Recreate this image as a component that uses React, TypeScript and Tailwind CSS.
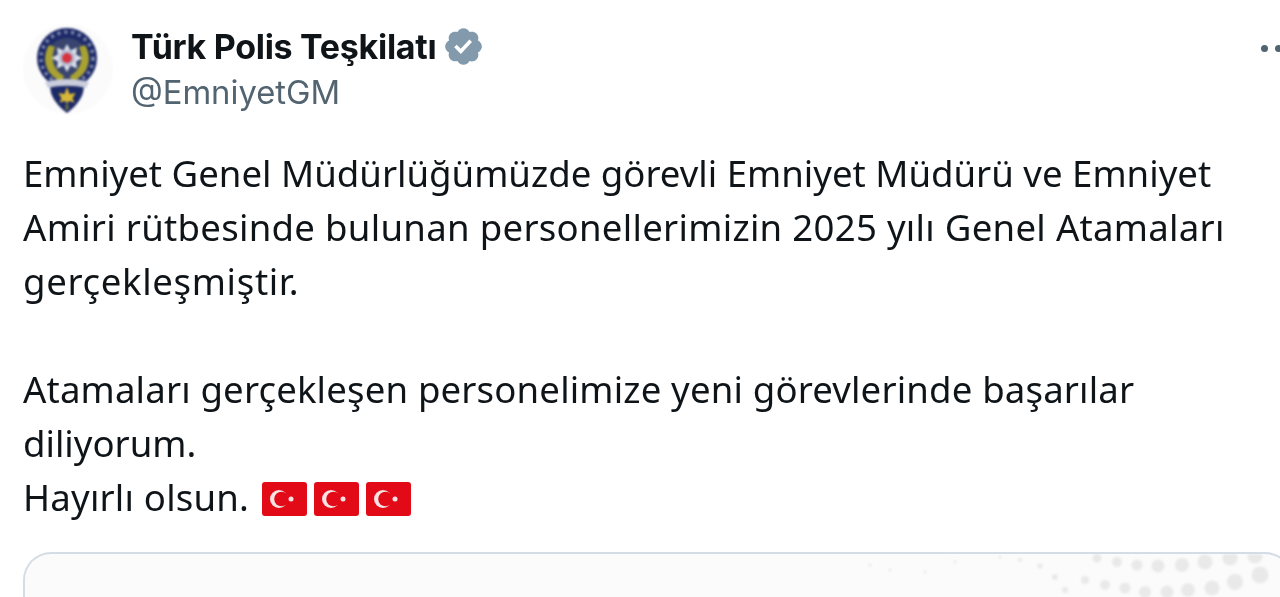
function Emblem() {
  return (
    <svg viewBox="0 0 90 90" className="h-[90px] w-[90px] shrink-0 blur-[0.9px]">
      <circle cx="45" cy="45" r="45" fill="#fbfbfc" />
      {/* lower shield */}
      <path d="M26 56h36l-2 13c-3 8-8 14-16 20-8-6-13-12-16-20Z" fill="#1d2a68" />
      {/* outer ring */}
      <circle cx="44" cy="34" r="30" fill="#1d2a68" />
      <circle cx="44" cy="34" r="26" fill="none" stroke="#c5cbe0" strokeWidth="3.500" strokeDasharray="3 4" opacity="0.6" />
      <circle cx="44" cy="35" r="21" fill="#39456f" />
      {/* wreath */}
      <path d="M26 21c-8 13-4 30 13 37l2-6c-11-6-14-18-9-29Z" fill="#a9a232" />
      <path d="M62 21c8 13 4 30-13 37l-2-6c11-6 14-18 9-29Z" fill="#a9a232" />
      {/* star */}
      <path
        d="M44 20l3.500 6.500 6.500-3-1 7 6.500 3.500-6.500 3.500 1 7-6.500-3-3.500 6.500-3.500-6.500-6.500 3 1-7-6.500-3.500 6.500-3.500-1-7 6.500 3Z"
        fill="#dfe2ec"
      />
      <circle cx="44" cy="34" r="8" fill="#b4bbd3" />
      <circle cx="44" cy="34" r="5" fill="#d6353f" />
      {/* ribbon */}
      <path d="M22 58c12-4 32-4 44 0l-3 6c-12-3-26-3-38 0Z" fill="#c9cddc" />
      {/* trident */}
      <path d="M44 63l2.500 7 6-1-3 5.500 2 4-5.500-1.500-2 2.500-2-2.500-5.500 1.500 2-4-3-5.500 6 1Z" fill="#d8b736" />
      <rect x="42.500" y="80" width="3" height="6" fill="#6b6f3f" />
    </svg>
  );
}

function Verified() {
  return (
    <svg viewBox="0 0 22 22" className="h-[43px] w-[43px]">
      <path
        fill="#829aab"
        d="M20.396 11c-.018-.646-.215-1.275-.57-1.816-.354-.54-.852-.972-1.438-1.246.223-.607.27-1.264.14-1.897-.131-.634-.437-1.218-.882-1.687-.47-.445-1.053-.75-1.687-.882-.633-.13-1.29-.083-1.897.14-.273-.587-.704-1.086-1.245-1.44S11.647 1.62 11 1.604c-.646.017-1.273.213-1.813.568s-.969.854-1.24 1.44c-.608-.223-1.267-.272-1.902-.14-.635.13-1.22.436-1.69.882-.445.47-.749 1.055-.878 1.688-.13.633-.08 1.29.144 1.896-.587.274-1.087.705-1.443 1.245-.356.54-.555 1.17-.574 1.817.02.647.218 1.276.574 1.817.356.54.856.972 1.443 1.245-.224.606-.274 1.263-.144 1.896.13.634.433 1.218.877 1.688.47.443 1.054.747 1.687.878.633.132 1.29.084 1.897-.136.274.586.705 1.084 1.246 1.439.54.354 1.17.551 1.816.569.647-.016 1.276-.213 1.817-.567s.972-.854 1.245-1.44c.604.239 1.266.296 1.903.164.636-.132 1.22-.447 1.68-.907.46-.46.776-1.044.908-1.681s.075-1.299-.165-1.903c.586-.274 1.084-.705 1.439-1.246.354-.54.551-1.17.569-1.816z"
      />
      <path fill="#fff" d="M9.662 14.85l-3.429-3.428 1.293-1.302 2.072 2.072 4.4-4.794 1.347 1.246z" />
    </svg>
  );
}

function Flag() {
  return (
    <svg viewBox="0 0 45 34" className="h-[34px] w-[45px]">
      <rect width="45" height="34" rx="3" fill="#e30a17" />
      <circle cx="17" cy="17" r="9" fill="#f7e3e3" />
      <circle cx="19.500" cy="17" r="7.300" fill="#e30a17" />
      <circle cx="29" cy="17" r="2.500" fill="#f7e3e3" />
    </svg>
  );
}

// halftone pattern at the top of the card, page coordinates
const dots = [
  [1097, 558, 4.500], [1117, 562, 5], [1137, 565, 5.500], [1158, 566, 6.500], [1182, 565, 7], [1205, 562, 7.500], [1230, 558, 7.500], [1255, 556, 7.500],
  [1085, 580, 4], [1105, 585, 5], [1125, 588, 5.500], [1145, 592, 6], [1167, 592, 6.500], [1188, 590, 7], [1212, 588, 7.500], [1235, 582, 8], [1260, 575, 8.500],
  [1040, 566, 2.500], [1055, 577, 3], [1065, 590, 3], [1020, 560, 2], [1000, 557, 1.500], [955, 562, 1.500], [925, 572, 1.500], [890, 570, 1.500], [870, 565, 1.500],
];

function Dots() {
  return (
    <svg className="absolute left-0 top-0 h-[45px] w-[1268px] blur-[1px]" viewBox="25 554 1268 45">
      {dots.map(([x, y, r]) => (
        <circle key={`${x}-${y}`} cx={x} cy={y} r={r} fill="#e9e9ea" />
      ))}
    </svg>
  );
}

export default function App() {
  return (
    <div className="h-[597px] w-[1280px] overflow-hidden bg-white pl-[23px] pt-[24px] blur-[0.4px]">
      <div className="flex items-start">
        <Emblem />
        <div className="ml-[18px] flex-1">
          <div className='flex h-[45px] items-center font-["Inter",sans-serif] text-[34px] font-bold tracking-[-0.3px] text-[#0f1419]'>
            Türk Polis Teşkilatı
            <span className="ml-[6px] flex"><Verified /></span>
          </div>
          <div className='font-["Inter",sans-serif] text-[32.800px] leading-[46px] text-[#536471]'>@EmniyetGM</div>
        </div>
        <div className="mr-[-2px] mt-[21px] flex shrink-0 gap-[7px]">
          <span className="h-[7px] w-[7px] rounded-full bg-[#536471]" />
          <span className="h-[7px] w-[7px] rounded-full bg-[#536471]" />
        </div>
      </div>

      <div className='mt-[31px] font-["Noto_Sans",sans-serif] text-[36.600px] leading-[54px] text-[#0f1419]'>
        <p>Emniyet Genel Müdürlüğümüzde görevli Emniyet Müdürü ve Emniyet</p>
        <p className="tracking-[0.28px]">Amiri rütbesinde bulunan personellerimizin 2025 yılı Genel Atamaları</p>
        <p className="tracking-[0.66px]">gerçekleşmiştir.</p>
        <p>&nbsp;</p>
        <p className="tracking-[0.16px]">Atamaları gerçekleşen personelimize yeni görevlerinde başarılar</p>
        <p>diliyorum.</p>
        <p className="flex items-center tracking-[0.2px]">
          Hayırlı olsun.
          <span className="ml-[13px] mt-[3px] flex gap-[7px]">
            <Flag />
            <Flag />
            <Flag />
          </span>
        </p>
      </div>

      <div className="relative mt-[28px] h-[80px] w-[1270px] overflow-hidden rounded-t-[28px] border-2 border-b-0 border-[#d4dde5] bg-[#fbfbfb]">
        <Dots />
      </div>
    </div>
  );
}
